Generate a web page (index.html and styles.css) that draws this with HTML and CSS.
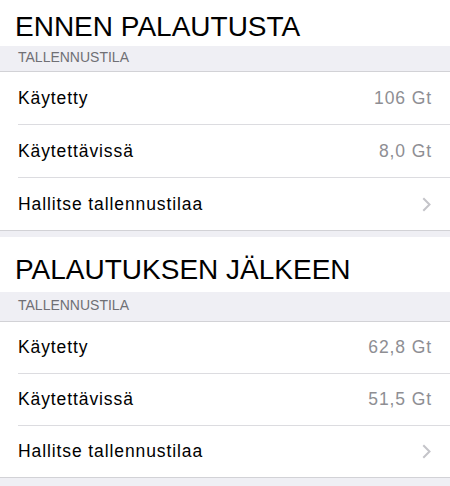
FILE: index.html
```html
<!DOCTYPE html>
<html lang="fi">
<head>
<meta charset="utf-8">
<title>Tallennustila</title>
<link rel="stylesheet" href="styles.css">
</head>
<body>
  <section class="section">
    <h1 class="title">ENNEN PALAUTUSTA</h1>
    <div class="band">TALLENNUSTILA</div>
    <ul class="list">
      <li class="row"><span class="label">Käytetty</span><span class="value">106 Gt</span></li>
      <li class="row"><span class="label">Käytettävissä</span><span class="value">8,0 Gt</span></li>
      <li class="row"><span class="label">Hallitse tallennustilaa</span>
        <svg class="chevron" width="9" height="15" viewBox="0 0 9 15"><path d="M1.3 1.3 L7.5 7.5 L1.3 13.7" fill="none" stroke="#c4c4c9" stroke-width="2"/></svg>
      </li>
    </ul>
  </section>
  <div class="gap"></div>
  <section class="section">
    <h1 class="title title--second">PALAUTUKSEN JÄLKEEN</h1>
    <div class="band band--tall">TALLENNUSTILA</div>
    <ul class="list list--compact">
      <li class="row"><span class="label">Käytetty</span><span class="value">62,8 Gt</span></li>
      <li class="row"><span class="label">Käytettävissä</span><span class="value">51,5 Gt</span></li>
      <li class="row"><span class="label">Hallitse tallennustilaa</span>
        <svg class="chevron" width="9" height="15" viewBox="0 0 9 15"><path d="M1.3 1.3 L7.5 7.5 L1.3 13.7" fill="none" stroke="#c4c4c9" stroke-width="2"/></svg>
      </li>
    </ul>
  </section>
  <div class="gap gap--end"></div>
</body>
</html>
```
FILE: styles.css
```css
html, body {
  margin: 0;
  padding: 0;
  background: #ffffff;
}
body {
  font-family: "Liberation Sans", Arial, sans-serif;
  color: #000;
  width: 450px;
  overflow: hidden;
}
.title {
  margin: 0;
  font-weight: normal;
  font-size: 28px;
  line-height: 32px;
  padding: 11px 15px 3px;
  background: #fff;
}
.title--second {
  padding-top: 17px;
  padding-bottom: 6px;
}
.band {
  background: #efeff4;
  color: #707075;
  font-size: 14px;
  line-height: 17px;
  padding: 3px 18px 5px;
  border-bottom: 1px solid #d2d2d6;
}
.band--tall {
  padding-top: 5px;
  padding-bottom: 7px;
}
.list {
  list-style: none;
  margin: 0;
  padding: 0;
  background: #fff;
}
.row {
  position: relative;
  height: 52px;
  display: flex;
  align-items: center;
  justify-content: space-between;
  padding: 0 18px 0 18px;
  font-size: 17.5px;
  letter-spacing: 0.9px;
  border-bottom: 1px solid transparent;
}
.list--compact .row {
  height: 51px;
}
.row::after {
  content: "";
  position: absolute;
  left: 18px;
  right: 0;
  bottom: -1px;
  height: 1px;
  background: #dcdce0;
}
.row:last-child::after {
  left: 0;
  background: #d2d2d6;
}
.value {
  color: #8e8e93;
}
.chevron {
  display: block;
  margin-right: 1px;
}
.gap {
  height: 6px;
  background: #efeff4;
}
.gap--end {
  height: 20px;
}
```
